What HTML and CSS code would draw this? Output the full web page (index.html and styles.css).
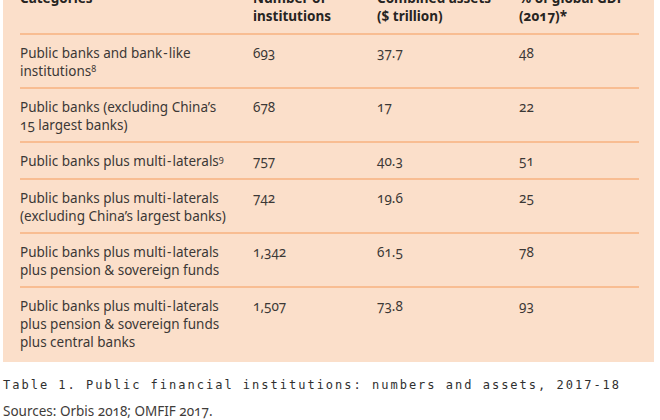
FILE: index.html
```html
<!DOCTYPE html>
<html lang="en">
<head>
<meta charset="utf-8">
<title>Public financial institutions</title>
<link rel="stylesheet" href="styles.css">
</head>
<body>
<div class="panel">
  <div class="row head">
    <div>Categories</div>
    <div>Number of<br>institutions</div>
    <div>Combined assets<br>($ trillion)</div>
    <div>% of global GDP<br>(2017)*</div>
  </div>
  <div class="row">
    <div>Public banks and bank<span class="hy">-</span>like<br>institutions<sup>8</sup></div>
    <div>693</div>
    <div>37.7</div>
    <div>48</div>
  </div>
  <div class="row">
    <div>Public banks (excluding China’s<br>15 largest banks)</div>
    <div>678</div>
    <div>17</div>
    <div>22</div>
  </div>
  <div class="row single">
    <div>Public banks plus multi<span class="hy">-</span>laterals<sup>9</sup></div>
    <div>757</div>
    <div>40.3</div>
    <div>51</div>
  </div>
  <div class="row">
    <div>Public banks plus multi<span class="hy">-</span>laterals<br>(excluding China’s largest banks)</div>
    <div>742</div>
    <div>19.6</div>
    <div>25</div>
  </div>
  <div class="row">
    <div>Public banks plus multi<span class="hy">-</span>laterals<br>plus pension &amp; sovereign funds</div>
    <div>1,342</div>
    <div>61.5</div>
    <div>78</div>
  </div>
  <div class="row last">
    <div>Public banks plus multi<span class="hy">-</span>laterals<br>plus pension &amp; sovereign funds<br>plus central banks</div>
    <div>1,507</div>
    <div>73.8</div>
    <div>93</div>
  </div>
</div>
<p class="caption">Table 1. Public financial institutions: numbers and assets, 2017-18</p>
<p class="sources">Sources: Orbis 2018; OMFIF 2017.</p>
</body>
</html>
```
FILE: styles.css
```css
html, body {
  margin: 0;
  padding: 0;
  background: #ffffff;
}
body {
  font-family: "Noto Sans", "Open Sans", sans-serif;
  font-size: 13.5px;
  line-height: 18px;
  color: #3b3836;
  font-feature-settings: "onum" 1;
  width: 660px;
  height: 420px;
  overflow: hidden;
}
.panel {
  background: #fbdfca;
  margin: -21px 6px 0 3px;
  padding: 0 15px 11px 17px;
}
.row {
  display: grid;
  grid-template-columns: 233px 124px 142px 1fr;
  padding: 9px 0 7px;
  border-bottom: 2px solid #f8bd92;
}
.row.head {
  padding: 10px 0 8px;
  font-weight: 700;
  color: #262422;
}
.row.single {
  padding-bottom: 8px;
}
.row.last {
  border-bottom: none;
  padding-bottom: 0;
}
.hy {
  margin: 0 1px;
}
sup {
  font-size: 9px;
  line-height: 0;
  vertical-align: 4px;
}
.caption {
  margin: 14px 0 0 3px;
  font-family: "DejaVu Sans Mono", "Liberation Mono", monospace;
  font-size: 12px;
  letter-spacing: 2px;
  color: #2f2f2f;
  font-feature-settings: normal;
}
.sources {
  margin: 8px 0 0 3px;
  color: #3f3c3a;
}
```
